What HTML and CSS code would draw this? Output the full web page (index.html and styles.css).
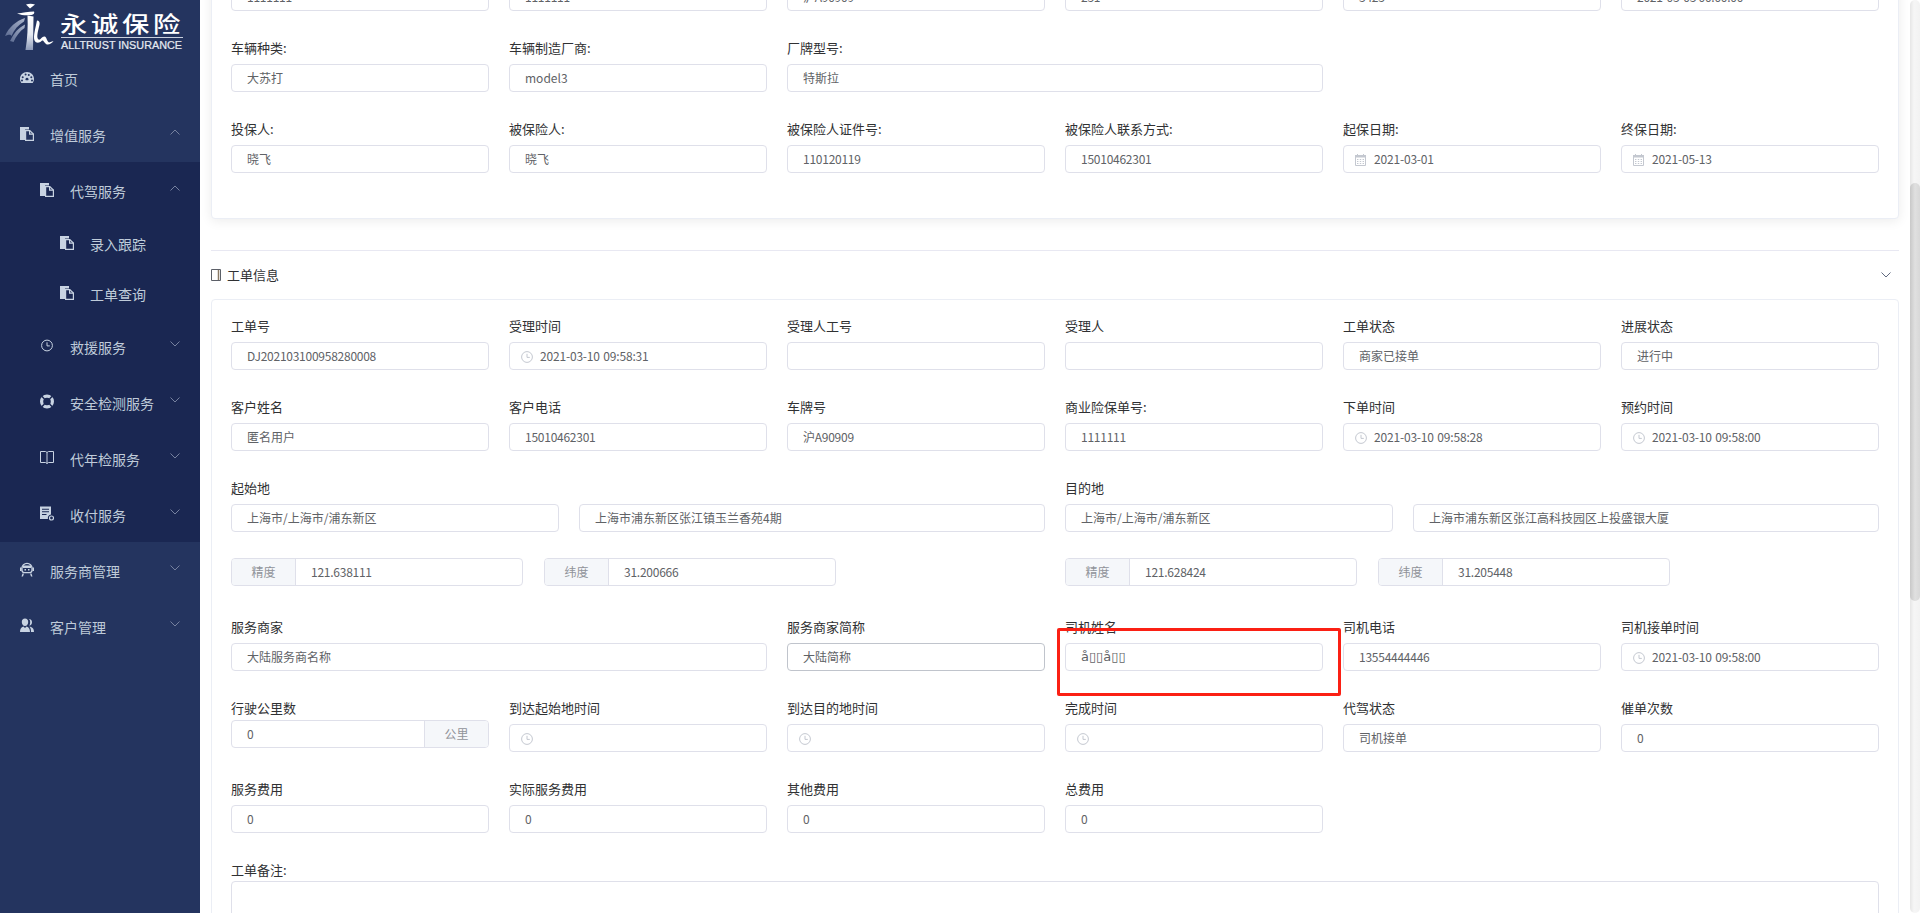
FILE: index.html
```html
<!DOCTYPE html>
<html lang="zh-CN">
<head>
<meta charset="utf-8">
<title>永诚保险</title>
<link rel="stylesheet" href="styles.css">
</head>
<body>
<svg class="defs" width="0" height="0" aria-hidden="true">
  <defs>
    <symbol id="i-copy" viewBox="0 0 14 15"><path fill="currentColor" d="M0 1h9v2.500H5V14H0z"/><path fill="none" stroke="currentColor" stroke-width="1.200" d="M5.600 4.600h4.200l3.600 3.400v6.400H5.600z"/><path fill="currentColor" d="M9 4.600h1.200v3h3.200v1.200H9z"/></symbol>
    <symbol id="i-clock" viewBox="0 0 12 12"><circle cx="6" cy="6" r="5.400" fill="none" stroke="currentColor" stroke-width="1"/><path fill="none" stroke="currentColor" stroke-width="1" d="M6 2.800v3.600h2.800"/></symbol>
    <symbol id="i-cal" viewBox="0 0 11 12"><path fill="none" stroke="currentColor" d="M.5 1.500h10v10H.5z"/><path fill="currentColor" d="M0 1h11v2.500H0zM2 0h1v2H2zM8 0h1v2H8zM2 5h1.400v1H2zM4.800 5h1.400v1H4.800zM7.600 5h1.400v1H7.600zM2 7h1.400v1H2zM4.800 7h1.400v1H4.800zM7.600 7h1.400v1H7.600zM2 9h1.400v1H2zM4.800 9h1.400v1H4.800zM7.600 9h1.400v1H7.600z"/></symbol>
    <symbol id="i-down" viewBox="0 0 10 6"><path fill="none" stroke="currentColor" stroke-width="1" d="M.5.500 5 5 9.500.500"/></symbol>
    <symbol id="i-up" viewBox="0 0 10 6"><path fill="none" stroke="currentColor" stroke-width="1" d="M.5 5.500 5 1l4.500 4.500"/></symbol>
  </defs>
</svg>
<div class="app">
  <aside class="sidebar">
    <div class="logo">
      <svg width="200" height="50" viewBox="0 0 200 50">
        <defs>
          <linearGradient id="stem" x1="0" y1="0" x2="0" y2="1"><stop offset="0" stop-color="#fff"/><stop offset=".55" stop-color="#e4e8f0"/><stop offset="1" stop-color="#8d9ab8"/></linearGradient>
          <linearGradient id="swoosh" x1="0" y1="1" x2="1" y2="0"><stop offset="0" stop-color="#5d6c92"/><stop offset="1" stop-color="#aab4cb"/></linearGradient>
        </defs>
        <path fill="#fff" d="M26 4.500C29 3.500 32 3.500 35 4.500L30 8.500Z"/>
        <path fill="#fff" d="M17 13.500C22 13 29 11.500 34 11.500C35 13 33.500 14.500 31.500 15C27 15.500 22 15.500 17 13.500Z"/>
        <path fill="url(#stem)" d="M27.500 15.500 33.500 16.500 33 50H25.500C27.500 38 28 27 27.500 15.500Z"/>
        <path fill="url(#swoosh)" d="M5 36C9 27 16 21 25 18L24 21.500C18 25 14 30 11.500 36C10.500 34 9 34.500 5 36Z"/>
        <path fill="url(#swoosh)" d="M10 41C14 33 18 28 25 24.500L24.500 28C20 31 16 36 13.500 42Z"/>
        <path fill="#fff" d="M37 20.500C41 21 39.500 25 38.500 29C37.500 33 36.500 38 38.500 39.500C40.500 40.500 42 36 44.500 36.500C47 37 46.500 41 49 42.500L53.500 41C51.500 44 48 45.500 46 44C43.500 42 43.500 39.500 41.500 41C39.500 43 36 43.500 34.500 40.500C33 36 35.500 28 37 20.500Z"/>
        <text class="logo-cn" x="60" y="32" textLength="124" lengthAdjust="spacingAndGlyphs">永诚保险</text>
        <rect x="61" y="37" width="122" height="1" fill="#c9d0de"/>
        <text class="logo-en" x="61" y="49" textLength="121" lengthAdjust="spacingAndGlyphs">ALLTRUST INSURANCE</text>
      </svg>
    </div>
    <nav class="nav">
      <a class="item lv1"><svg class="ic" viewBox="0 0 14 11"><path fill="currentColor" fill-rule="evenodd" d="M7 0c3.900 0 7 3 7 6.800 0 1.600-.5 3-1.300 4.200H1.300C.5 9.800 0 8.400 0 6.800 0 3 3.100 0 7 0ZM5.600 1.600a1 1 0 1 0 0 2 1 1 0 0 0 0-2Zm3.200.3a1 1 0 1 0 0 2 1 1 0 0 0 0-2ZM2.700 4.200a1 1 0 1 0 0 2 1 1 0 0 0 0-2Zm8.600 0a1 1 0 1 0 0 2 1 1 0 0 0 0-2ZM7 5.800a1.500 1.500 0 0 0-1.200 2.500h2.400A1.500 1.500 0 0 0 7 5.800ZM2 7.600a1 1 0 1 0 0 2 1 1 0 0 0 0-2Zm10 0a1 1 0 1 0 0 2 1 1 0 0 0 0-2Z"/></svg><span>首页</span></a>
      <a class="item lv1"><svg class="ic"><use href="#i-copy"/></svg><span>增值服务</span><svg class="chev"><use href="#i-up"/></svg></a>
      <div class="sub">
        <a class="item lv2"><svg class="ic"><use href="#i-copy"/></svg><span>代驾服务</span><svg class="chev"><use href="#i-up"/></svg></a>
        <a class="item lv3"><svg class="ic"><use href="#i-copy"/></svg><span>录入跟踪</span></a>
        <a class="item lv3"><svg class="ic"><use href="#i-copy"/></svg><span>工单查询</span></a>
        <a class="item lv2"><svg class="ic ic-sm"><use href="#i-clock"/></svg><span>救援服务</span><svg class="chev"><use href="#i-down"/></svg></a>
        <a class="item lv2"><svg class="ic" viewBox="0 0 14 14"><path fill="currentColor" fill-rule="evenodd" d="M7 0a7 7 0 1 1 0 14A7 7 0 0 1 7 0Zm0 3.200a3.800 3.800 0 1 0 0 7.600 3.800 3.800 0 0 0 0-7.600Z"/><path stroke="#1a2752" stroke-width="1.500" d="m1.800 1.800 2.700 2.700M12.200 1.800 9.500 4.500M1.800 12.200l2.700-2.700M12.200 12.200 9.500 9.500"/></svg><span>安全检测服务</span><svg class="chev"><use href="#i-down"/></svg></a>
        <a class="item lv2"><svg class="ic" viewBox="0 0 14 13"><path fill="none" stroke="currentColor" d="M.5.500h5L7 1.500 8.500.500h5v11h-5L7 12.500l-1.500-1h-5zM7 1.500v11"/></svg><span>代年检服务</span><svg class="chev"><use href="#i-down"/></svg></a>
        <a class="item lv2"><svg class="ic" viewBox="0 0 14 14"><path fill="currentColor" fill-rule="evenodd" d="M0 0h11v8a3.500 3.500 0 0 0-3 4.500H0ZM2 2.200v1h7v-1Zm0 2.600v1h7v-1Zm0 2.600v1h4.500v-1Z"/><circle cx="11.500" cy="11.500" r="2" fill="none" stroke="currentColor" stroke-width="1.200"/></svg><span>收付服务</span><svg class="chev"><use href="#i-down"/></svg></a>
      </div>
      <a class="item lv1"><svg class="ic" viewBox="0 0 14 14"><path fill="none" stroke="currentColor" stroke-width="1.300" d="M2 5.500a5 4.600 0 0 1 10 0v2.300a2.400 2.400 0 0 1-2.400 2.400H4.400A2.400 2.400 0 0 1 2 7.800z"/><path fill="currentColor" d="M0 5h1.600v3.500H0zM12.400 5H14v3.500h-1.600zM3 3h8v2.500H3zM4.500 6.500h1.500V8H4.500zM8 6.500h1.500V8H8zM2.500 11H4l-1 3H1.500zM10 11h1.500l1 3H11z"/></svg><span>服务商管理</span><svg class="chev"><use href="#i-down"/></svg></a>
      <a class="item lv1"><svg class="ic" viewBox="0 0 14 14"><path fill="currentColor" d="M5 0c2 0 3.200 1.500 3.200 3.500S7 7.500 5 7.500 1.800 5.500 1.800 3.500 3 0 5 0ZM0 13.500C0 10.500 1 8.800 3.400 8l1.600 1.500L6.600 8C9 8.800 10 10.500 10 13.500Z"/><path fill="currentColor" d="M9 .6c1.800 0 3 1.300 3 3.100s-1 3.300-2.700 3.500c.6-1 .9-2.300.9-3.700 0-1.100-.4-2.100-1.200-2.900ZM10.400 8.200C12.800 8.800 14 10.400 14 13.500h-3c0-2.300-.2-4-1.600-5.300Z"/></svg><span>客户管理</span><svg class="chev"><use href="#i-down"/></svg></a>
    </nav>
  </aside>

  <main class="main">
    <div class="content">
      <section class="card card-shadow">
        <div class="row">
          <div class="field"><label class="lbl">商业险保单号:</label><div class="inp num">1111111</div></div>
          <div class="field"><label class="lbl">交强险保单号:</label><div class="inp num">1111111</div></div>
          <div class="field"><label class="lbl">车牌号:</label><div class="inp num">沪A90909</div></div>
          <div class="field"><label class="lbl">车架号:</label><div class="inp num">231</div></div>
          <div class="field"><label class="lbl">发动机号:</label><div class="inp num">3423</div></div>
          <div class="field"><label class="lbl">初登日期:</label><div class="inp num">2021-03-03 00:00:00</div></div>
        </div>
        <div class="row">
          <div class="field"><label class="lbl">车辆种类:</label><div class="inp">大苏打</div></div>
          <div class="field"><label class="lbl">车辆制造厂商:</label><div class="inp">model3</div></div>
          <div class="field span2"><label class="lbl">厂牌型号:</label><div class="inp">特斯拉</div></div>
        </div>
        <div class="row">
          <div class="field"><label class="lbl">投保人:</label><div class="inp">晓飞</div></div>
          <div class="field"><label class="lbl">被保险人:</label><div class="inp">晓飞</div></div>
          <div class="field"><label class="lbl">被保险人证件号:</label><div class="inp num">110120119</div></div>
          <div class="field"><label class="lbl">被保险人联系方式:</label><div class="inp num">15010462301</div></div>
          <div class="field"><label class="lbl">起保日期:</label><div class="inp num icon"><svg class="pre pre-cal"><use href="#i-cal"/></svg>2021-03-01</div></div>
          <div class="field"><label class="lbl">终保日期:</label><div class="inp num icon"><svg class="pre pre-cal"><use href="#i-cal"/></svg>2021-05-13</div></div>
        </div>
      </section>

      <header class="sec-head">
        <svg class="sec-ic" viewBox="0 0 10 12"><path fill="none" stroke="#5c6068" d="M.5.500h9v11h-9z"/><path stroke="#8a7a66" stroke-width="1.500" d="M7.500 1v10"/></svg>
        <span class="sec-title">工单信息</span>
        <svg class="sec-arrow"><use href="#i-down"/></svg>
      </header>

      <section class="card">
        <div class="row">
          <div class="field"><label class="lbl">工单号</label><div class="inp num">DJ202103100958280008</div></div>
          <div class="field"><label class="lbl">受理时间</label><div class="inp num icon"><svg class="pre"><use href="#i-clock"/></svg>2021-03-10 09:58:31</div></div>
          <div class="field"><label class="lbl">受理人工号</label><div class="inp"></div></div>
          <div class="field"><label class="lbl">受理人</label><div class="inp"></div></div>
          <div class="field"><label class="lbl">工单状态</label><div class="inp">商家已接单</div></div>
          <div class="field"><label class="lbl">进展状态</label><div class="inp">进行中</div></div>
        </div>
        <div class="row">
          <div class="field"><label class="lbl">客户姓名</label><div class="inp">匿名用户</div></div>
          <div class="field"><label class="lbl">客户电话</label><div class="inp num">15010462301</div></div>
          <div class="field"><label class="lbl">车牌号</label><div class="inp num">沪A90909</div></div>
          <div class="field"><label class="lbl">商业险保单号:</label><div class="inp num">1111111</div></div>
          <div class="field"><label class="lbl">下单时间</label><div class="inp num icon"><svg class="pre"><use href="#i-clock"/></svg>2021-03-10 09:58:28</div></div>
          <div class="field"><label class="lbl">预约时间</label><div class="inp num icon"><svg class="pre"><use href="#i-clock"/></svg>2021-03-10 09:58:00</div></div>
        </div>
        <div class="row-half row-addr">
          <div class="half">
            <label class="lbl">起始地</label>
            <div class="addr"><div class="inp">上海市/上海市/浦东新区</div><div class="inp">上海市浦东新区张江镇玉兰香苑4期</div></div>
          </div>
          <div class="half">
            <label class="lbl">目的地</label>
            <div class="addr"><div class="inp">上海市/上海市/浦东新区</div><div class="inp">上海市浦东新区张江高科技园区上投盛银大厦</div></div>
          </div>
        </div>
        <div class="row-half row-geo">
          <div class="geo">
            <div class="group"><span class="addon addon-l">精度</span><span class="group-val num">121.638111</span></div>
            <div class="group"><span class="addon addon-l">纬度</span><span class="group-val num">31.200666</span></div>
          </div>
          <div class="geo">
            <div class="group"><span class="addon addon-l">精度</span><span class="group-val num">121.628424</span></div>
            <div class="group"><span class="addon addon-l">纬度</span><span class="group-val num">31.205448</span></div>
          </div>
        </div>
        <div class="row">
          <div class="field span2"><label class="lbl">服务商家</label><div class="inp">大陆服务商名称</div></div>
          <div class="field"><label class="lbl">服务商家简称</label><div class="inp hover">大陆简称</div></div>
          <div class="field driver"><label class="lbl">司机姓名</label><div class="inp mojibake">å▯▯å▯▯</div><div class="redbox"></div></div>
          <div class="field"><label class="lbl">司机电话</label><div class="inp num">13554444446</div></div>
          <div class="field"><label class="lbl">司机接单时间</label><div class="inp num icon"><svg class="pre"><use href="#i-clock"/></svg>2021-03-10 09:58:00</div></div>
        </div>
        <div class="row">
          <div class="field"><label class="lbl lbl-tight">行驶公里数</label><div class="group"><span class="group-val group-val-l num">0</span><span class="addon addon-r">公里</span></div></div>
          <div class="field"><label class="lbl">到达起始地时间</label><div class="inp icon"><svg class="pre"><use href="#i-clock"/></svg></div></div>
          <div class="field"><label class="lbl">到达目的地时间</label><div class="inp icon"><svg class="pre"><use href="#i-clock"/></svg></div></div>
          <div class="field"><label class="lbl">完成时间</label><div class="inp icon"><svg class="pre"><use href="#i-clock"/></svg></div></div>
          <div class="field"><label class="lbl">代驾状态</label><div class="inp">司机接单</div></div>
          <div class="field"><label class="lbl">催单次数</label><div class="inp num">0</div></div>
        </div>
        <div class="row">
          <div class="field"><label class="lbl">服务费用</label><div class="inp num">0</div></div>
          <div class="field"><label class="lbl">实际服务费用</label><div class="inp num">0</div></div>
          <div class="field"><label class="lbl">其他费用</label><div class="inp num">0</div></div>
          <div class="field"><label class="lbl">总费用</label><div class="inp num">0</div></div>
        </div>
        <div class="note">
          <label class="lbl lbl-flush">工单备注:</label>
          <div class="textarea"></div>
        </div>
      </section>
    </div>
  </main>
  <div class="scrollbar"><div class="thumb"></div></div>
</div>
</body>
</html>
```

FILE: styles.css
```css
* { box-sizing: border-box; }
html, body { margin: 0; height: 100%; overflow: hidden; }
body { font-family: "Noto Sans CJK SC", "Noto Sans", "DejaVu Sans", sans-serif; font-size: 12px; color: #606266; background: #fff; }
.defs { position: absolute; }
.app { display: flex; height: 913px; overflow: hidden; }

/* Sidebar */
.sidebar { width: 200px; flex: none; background: #24345f; color: #bfcbd9; }
.logo { height: 50px; overflow: hidden; }
.logo svg { display: block; }
.logo-cn { font-family: "Noto Sans CJK SC", sans-serif; font-size: 22px; letter-spacing: 3px; fill: #fff; font-weight: 500; }
.logo-en { font-family: "Liberation Sans", sans-serif; font-size: 10px; font-weight: 400; fill: #e6eaf2; stroke: #e6eaf2; stroke-width: .2px; }
.nav { display: flex; flex-direction: column; }
.sub { background: #1a2752; display: flex; flex-direction: column; }
.item { display: flex; align-items: center; height: 56px; position: relative; font-size: 14px; color: #bfcbd9; }
.item span { padding-top: 2px; line-height: 20px; }
.lv1 { padding-left: 20px; }
.lv2 { padding-left: 40px; }
.lv3 { padding-left: 60px; height: 50px; }
.ic { width: 14px; height: 15px; margin-right: 16px; color: #c8d3e2; margin-top: -2px; flex: none; }
.ic-sm { padding: 1px; }
.chev { position: absolute; left: 170px; top: 23px; width: 10px; height: 6px; color: #76819f; }

/* Main */
.main { flex: 1; min-width: 0; padding: 0 11px; overflow: hidden; }
.content { margin-top: -60px; }
.card { border: 1px solid #ebeef5; border-radius: 4px; padding: 17px 19px 17px; background: #fff; }
.card-shadow { box-shadow: 0 2px 12px rgba(0, 0, 0, .08); margin-bottom: 31px; }
.sec-head { display: flex; align-items: center; height: 49px; border-top: 1px solid #e8e8f2; }
.sec-ic { width: 10px; height: 12px; margin-right: 6px; }
.sec-title { font-size: 13px; color: #303133; padding-bottom: 2px; }
.sec-arrow { width: 10px; height: 6px; margin-left: auto; margin-right: 8px; color: #606a80; }

.row { display: grid; grid-template-columns: repeat(6, 258px); column-gap: 20px; margin-bottom: 28px; }
.span2 { grid-column: span 2; }
.field { position: relative; min-width: 0; }
.lbl { display: block; height: 20px; line-height: 18px; margin-bottom: 5px; font-size: 13px; color: #303133; white-space: nowrap; }
.lbl-tight { margin-bottom: 1px; }
.lbl-flush { margin-bottom: 0; margin-top: 1px; }
.inp { display: flex; align-items: center; height: 28px; border: 1px solid #dfe0ea; border-radius: 4px; padding: 0 0 2px 15px; background: #fff; font-size: 12px; color: #606266; white-space: nowrap; }
.inp.icon { padding-left: 30px; position: relative; }
.inp.hover { border-color: #c0c4cc; }
.num { letter-spacing: -.25px; }
.inp.num.icon { letter-spacing: -.18px; word-spacing: 1px; }
.mojibake { font-family: "DejaVu Sans", sans-serif; font-size: 13px; }
.pre { position: absolute; left: 11px; top: 8px; width: 12px; height: 12px; color: #c4c8d0; }
.pre-cal { width: 11px; }

.row-half { display: grid; grid-template-columns: 814px 814px; column-gap: 20px; }
.row-addr { margin-bottom: 26px; }
.row-geo { margin-bottom: 32px; }
.addr { display: grid; grid-template-columns: 328px 466px; column-gap: 20px; }
.geo { display: grid; grid-template-columns: 291.5px 291.5px; column-gap: 21.5px; justify-content: start; }

.group { display: flex; align-items: stretch; height: 28px; border: 1px solid #dfe0ea; border-radius: 4px; overflow: hidden; background: #fff; }
.group-val { flex: 1; display: flex; align-items: center; padding: 0 0 2px 15px; color: #606266; }
.addon { width: 64px; flex: none; display: flex; align-items: center; justify-content: center; padding-bottom: 2px; background: #f5f7fa; color: #909399; }
.addon-l { border-right: 1px solid #dfe0ea; }
.addon-r { border-left: 1px solid #dfe0ea; }

.redbox { position: absolute; left: -8px; top: 10px; width: 284px; height: 68px; border: 3px solid #fb2014; border-radius: 2px; pointer-events: none; }

.note { margin-top: 1px; }
.textarea { height: 70px; border: 1px solid #dfe0ea; border-radius: 4px; }

/* Scrollbar */
.scrollbar { width: 10px; flex: none; background: linear-gradient(90deg, #e6e6e6, #f6f6f6 40%, #f2f2f2); border-radius: 5px; padding-top: 183px; }
.thumb { height: 418px; border-radius: 5px; background: linear-gradient(90deg, #c8c8c8, #e0e0e0 50%, #d8d8d8); }
```
